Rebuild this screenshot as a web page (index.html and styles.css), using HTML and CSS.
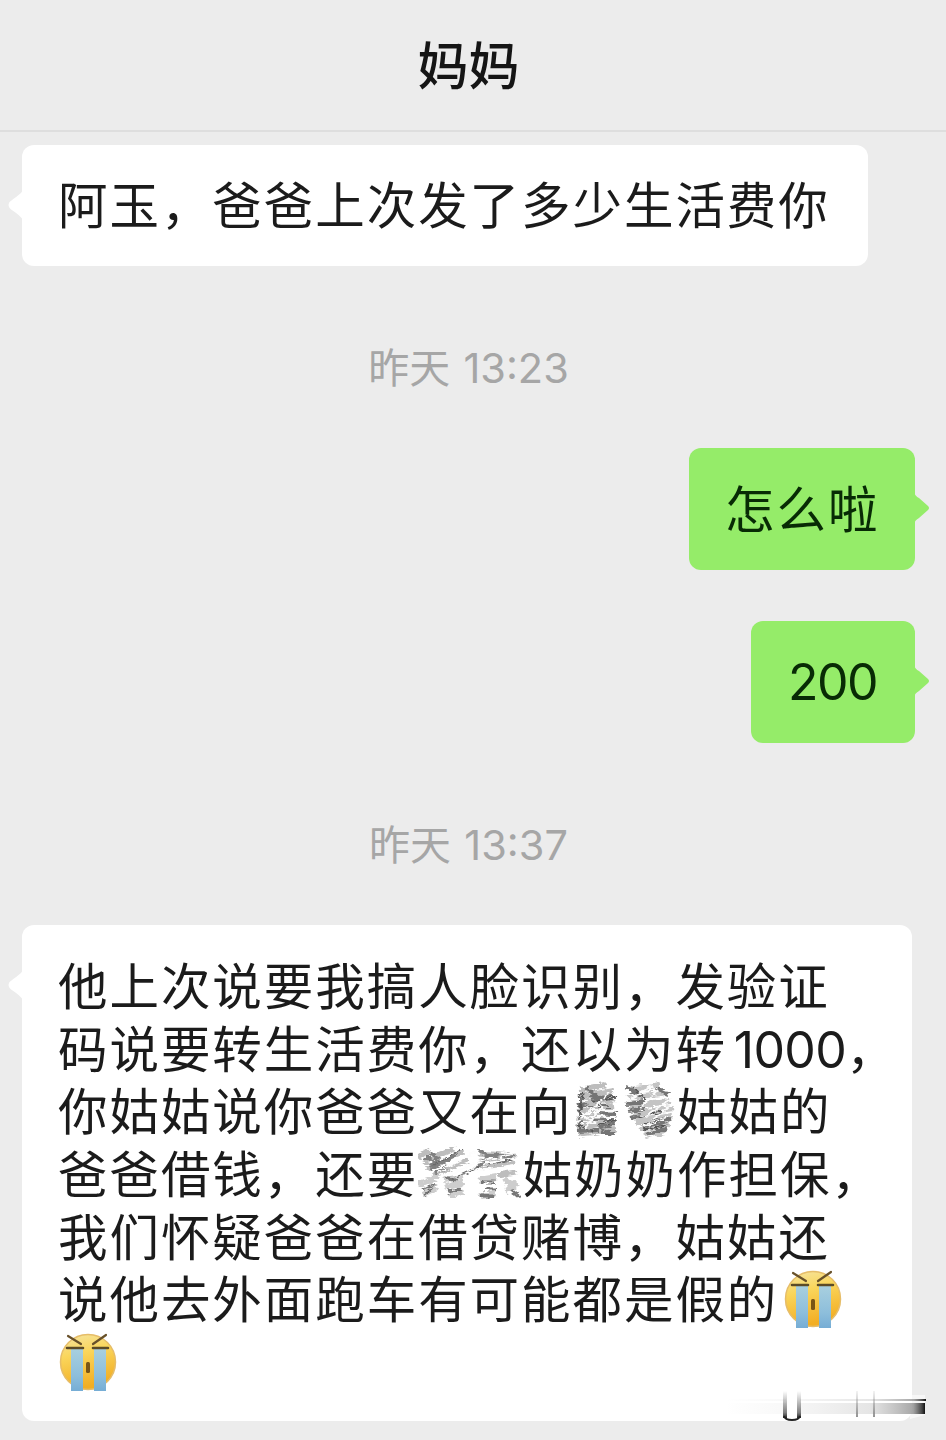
FILE: index.html
```html
<!DOCTYPE html>
<html lang="zh-CN">
<head>
<meta charset="utf-8">
<title>妈妈</title>
<link rel="stylesheet" href="styles.css">
</head>
<body>
<svg class="defs" aria-hidden="true">
  <defs>
    <linearGradient id="face" x1="0" y1="0" x2="0.25" y2="1"><stop offset="0" stop-color="#f5e5a4"/><stop offset=".4" stop-color="#fad65c"/><stop offset="1" stop-color="#f2ae24"/></linearGradient>
    <linearGradient id="tear" x1="0" y1="0" x2="0" y2="1"><stop offset="0" stop-color="#a9d0df"/><stop offset=".65" stop-color="#8dbedb"/><stop offset="1" stop-color="#76add5"/></linearGradient>
    <filter id="rough" x="-10%" y="-10%" width="120%" height="120%"><feTurbulence type="fractalNoise" baseFrequency=".12 .4" numOctaves="2" seed="4" result="n"/><feDisplacementMap in="SourceGraphic" in2="n" scale="7" xChannelSelector="R" yChannelSelector="G"/><feGaussianBlur stdDeviation=".6"/></filter>
    <symbol id="cry" viewBox="0 0 60 62">
      <circle cx="30" cy="30" r="27.5" fill="url(#face)" stroke="#e6bd69" stroke-width="1.5"/>
      <path d="M13 16h12v43H13zM36 16h12v43H36z" fill="url(#tear)"/>
      <path d="M10 4l13 8M48 3l-13 9" stroke="#68512a" stroke-width="2.2" stroke-linecap="round"/>
      <path d="M9 16h16M35 16h15" stroke="#5c4b27" stroke-width="2.6" stroke-linecap="round"/>
      <rect x="28" y="30" width="4" height="11" rx="1.5" fill="#795415"/>
    </symbol>
  </defs>
</svg>
<div class="phone">
  <header class="title">妈妈</header>
  <main class="chat">
    <div class="bubble in first"><svg class="tail" viewBox="0 0 16 34"><path d="M16 0C14 7 2 12 1 15q-1 2 0 4c1 3 13 8 15 15z"/></svg>
      <div class="line">阿玉，爸爸上次发了多少生活费你</div></div>
    <time class="stamp one">昨天 <span class="clock">13:23</span></time>
    <div class="bubble out what"><div class="line">怎么啦</div><svg class="tail" viewBox="0 0 16 34"><path d="M0 1q1 4 5 6l9 8q2 2 0 4l-9 8q-4 2-5 6z"/></svg></div>
    <div class="bubble out amount"><div class="line"><span class="num">200</span></div><svg class="tail" viewBox="0 0 16 34"><path d="M0 1q1 4 5 6l9 8q2 2 0 4l-9 8q-4 2-5 6z"/></svg></div>
    <time class="stamp two">昨天 <span class="clock">13:37</span></time>
    <div class="bubble in long"><svg class="tail" viewBox="0 0 16 34"><path d="M16 0C14 7 2 12 1 15q-1 2 0 4c1 3 13 8 15 15z"/></svg>
      <div class="line">他上次说要我搞人脸识别，发验证</div>
      <div class="line">码说要转生活费你，还以为转<span class="num thousand">1000</span>，</div>
      <div class="line">你姑姑说你爸爸又在向<svg class="smudge" viewBox="0 0 103 62"><g filter="url(#rough)" fill="none">
        <path d="M7 12l26-5M6 19l34-6M6 26l36-5M5 33l36-5M4 41l39-5M4 49l38-5M5 56l38-5" stroke="#bdbdbd" stroke-width="6"/>
        <path d="M58 12l29-5M55 20l40-5M56 28l41-5M60 36l40-6M63 44l36-6M67 51l30-5M72 57l20-4" stroke="#c4c4c4" stroke-width="6"/>
        <path d="M5 28l9-3M4 53l22-1M28 53l14 3M18 21l22-3M27 35l16 1M27 50l15-5M12 9l12 10M54 10l16 8M53 26l18-2M56 33l15-3M83 10l13 7M70 49l28-8M74 56l20-5M57 40l11-2" stroke="#757575" stroke-width="4"/>
        <path d="M7 16v34M10 13l-3 28M16 28h24M18 42h25M6 47l14 7M20 24l24-5M59 9l16 14M66 40l22-6M70 52l22-4M72 46l25-8M24 47l18-5" stroke="#555" stroke-width="1.6"/>
        <path d="M5 43l31-28M12 50l17-22M20 32h22M22 39h20M8 35l14 10M53 24l27-17M73 39l26-19M80 42l16-14M70 49l27-11M67 31l18-20" stroke="#fbfbfb" stroke-width="2.2"/></g></svg>姑姑的</div>
      <div class="line">爸爸借钱，还要<svg class="smudge" viewBox="0 0 103 62"><g filter="url(#rough)" fill="none">
        <path d="M0 16l12-7M5 22l32-15M9 28l36-17M15 34l35-15M61 12l34 3M62 20l36-6M64 27l33-6M80 34l18-3" stroke="#bdbdbd" stroke-width="5"/>
        <path d="M0 43l20-7M5 53l14-7M26 39l19-3M28 46l18-4M31 55l14-6M61 39l18-3M62 55l16-2M86 38l12 9M87 50l12-8" stroke="#cdcdcd" stroke-width="6"/>
        <path d="M8 15l11 10M12 12l11 8M13 27l26-13M17 32l12-6M60 9l12 6M60 26l9-10M68 15h28" stroke="#808080" stroke-width="4"/>
        <path d="M63 41h14M66 48h12M63 55h14M6 48l10-5M28 38l12 1M31 51l13-3M93 49l10 8" stroke="#777" stroke-width="3"/>
        <path d="M16 24l28-16M60 21l8-4M70 24l24-5M5 55l10-8M34 38l28-13" stroke="#666" stroke-width="1.2"/>
        <path d="M20 31l38-20M26 35l30-12M60 20l35-7M56 30l40-6" stroke="#fdfdfd" stroke-width="2"/></g></svg>姑奶奶作担保，</div>
      <div class="line">我们怀疑爸爸在借贷赌博，姑姑还</div>
      <div class="line">说他去外面跑车有可能都是假的<svg class="emoji last"><use href="#cry"/></svg></div>
      <div class="line"><svg class="emoji"><use href="#cry"/></svg></div>
      <svg class="trace" viewBox="0 0 216 34">
        <defs>
          <linearGradient id="streak"><stop offset="0" stop-color="#aaa" stop-opacity="0"/><stop offset=".3" stop-color="#aaa" stop-opacity=".08"/><stop offset=".72" stop-color="#999" stop-opacity=".25"/><stop offset=".94" stop-color="#777" stop-opacity=".65"/><stop offset=".985" stop-color="#444"/><stop offset="1" stop-color="#111"/></linearGradient>
          <linearGradient id="drip" x1="0" y1="0" x2="0" y2="1"><stop offset="0" stop-color="#555" stop-opacity="0"/><stop offset=".8" stop-color="#555" stop-opacity=".75"/><stop offset="1" stop-color="#222"/></linearGradient>
          <linearGradient id="thin" x1="0" y1="0" x2="0" y2="1"><stop offset="0" stop-color="#888" stop-opacity=".1"/><stop offset="1" stop-color="#777" stop-opacity=".8"/></linearGradient>
        </defs>
        <path d="M200 6h15v20l-15 4z" fill="#fff" opacity=".6"/>
        <rect x="16" y="10" width="200" height="2" fill="url(#streak)"/><rect x="16" y="14" width="199" height="11" fill="url(#streak)"/>
        <rect x="76" y="4" width="14" height="24" fill="#fff"/>
        <path d="M73 2h4v27h-4zM87 2h4v27h-4z" fill="url(#drip)"/><path d="M146 2h2v26h-2zM163 2h2v26h-2z" fill="url(#thin)"/>
        <path d="M74 27q1 4 8 4t8-4" fill="none" stroke="#222" stroke-width="2"/>
      </svg>
    </div>
  </main>
</div>
</body>
</html>
```
FILE: styles.css
```css
* { box-sizing: border-box; }
body { margin: 0; background: #ececec; }
.defs { position: absolute; width: 0; height: 0; }
.phone {
  width: 946px;
  height: 1440px;
  overflow: hidden;
  background: #ececec;
  color: #1b1b1b;
  font-family: "Noto Sans CJK SC", sans-serif;
}
.title {
  height: 132px;
  padding: 0 9px 4px 0;
  display: flex;
  align-items: center;
  justify-content: center;
  border-bottom: 2px solid #dedede;
  font-size: 51px;
  font-weight: 500;
  color: #151515;
}
.chat { display: flex; flex-direction: column; padding: 13px 31px 0 22px; }
.bubble {
  position: relative;
  padding: 28px 36px;
  border-radius: 12px;
  font-size: 49.5px;
  letter-spacing: 1.95px;
}
.in { align-self: flex-start; background: #fff; }
.out { align-self: flex-end; background: #95ec69; color: #082b05; }
.line { height: 62.7px; line-height: 62.7px; white-space: nowrap; }
.first { width: 846px; height: 121px; padding-top: 27px; }
.what { width: 226px; height: 122px; margin-top: 48px; }
.amount { width: 164px; height: 122px; margin-top: 51px; padding: 27px 37px; }
.long { width: 890px; height: 496px; margin-top: 49px; }
.num { font-family: Inter, sans-serif; font-size: 50px; letter-spacing: -1.5px; }
.thousand { margin-left: 7px; letter-spacing: -.7px; }
.tail { position: absolute; width: 16px; height: 34px; top: 43px; fill: #fff; }
.in .tail { left: -14px; }
.out .tail { right: -15px; fill: #95ec69; }
.stamp {
  height: 60px;
  line-height: 60px;
  align-self: center;
  font-size: 41px;
  color: #a6a6a6;
  white-space: pre;
}
.clock { margin-left: 4px; font-family: Inter, sans-serif; font-size: 41.5px; }
.one { margin-top: 69px; margin-bottom: 5px; }
.two { margin-top: 69px; margin-bottom: 4px; }
.smudge { width: 103px; height: 62px; margin-right: 1.5px; vertical-align: top; }
.emoji { width: 60px; height: 62px; vertical-align: top; position: relative; top: 3px; }
.last { margin-left: 5px; }
.trace { position: absolute; left: 688px; top: 464px; width: 216px; height: 34px; }
```
